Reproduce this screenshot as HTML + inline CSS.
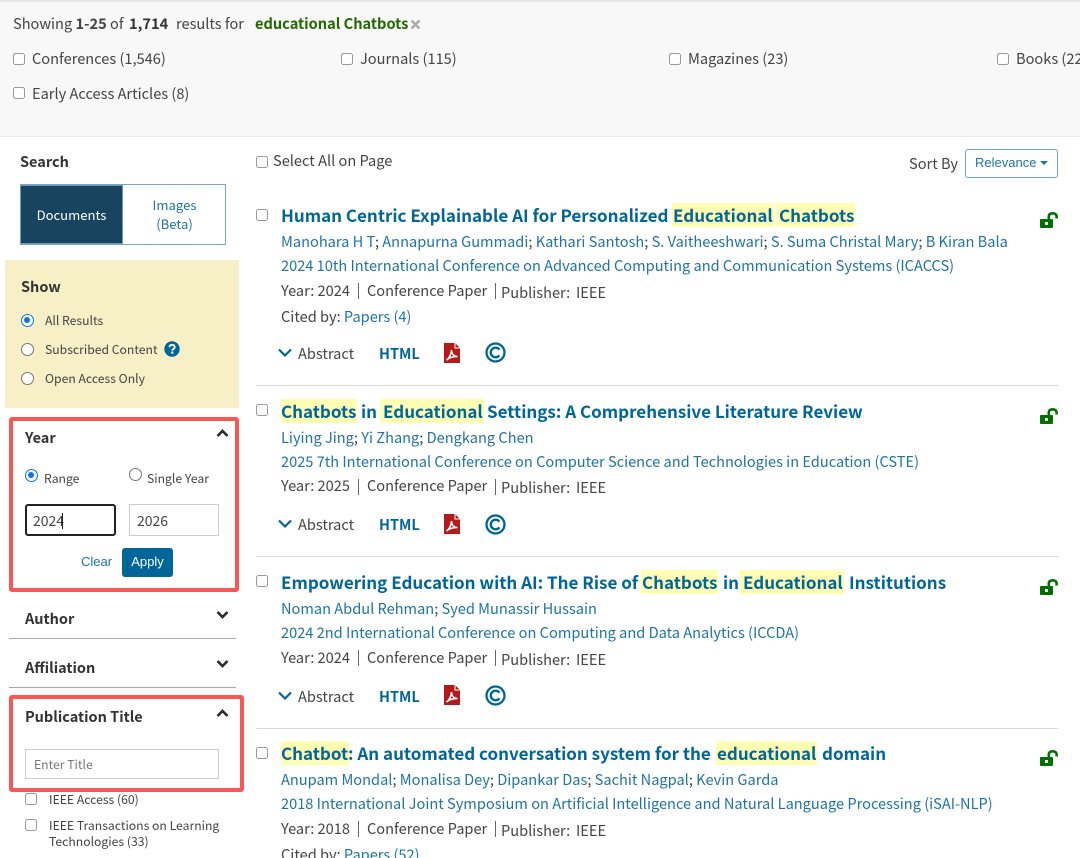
<!DOCTYPE html>
<html lang="en"><head><meta charset="utf-8"><title>Search results</title>
<style>
*{box-sizing:border-box}
html,body{margin:0;padding:0;width:1080px;height:858px;overflow:hidden;background:#fff}
body{position:relative;font-family:"Noto Sans CJK SC","Liberation Sans",sans-serif;color:#444;font-size:14.6px}
.t{position:absolute;white-space:nowrap;line-height:20px;height:20px}
.a{position:absolute}
.l{color:#1f74a6}
.ti{font-size:17px;font-weight:700;color:#006699;line-height:24px;height:24px}
.ti mark{position:absolute;top:0;background:#ffffb3;color:#006699;padding:0 1px}
.ti span{position:absolute;top:0}
.r{font-size:14.6px;color:#444;margin-top:1px}
.c{position:absolute;width:12px;height:12px;border:1px solid #999;border-radius:2.5px;background:#fff}
.s{font-size:12.2px;color:#444}
.h{font-size:14.5px;font-weight:700;color:#333;margin-top:1px}
.red{position:absolute;border:4.5px solid #f95656;border-radius:3px}
.sep{position:absolute;left:256px;width:802px;height:1px;background:#d9d9d9}
.radio{position:absolute;width:13px;height:13px;border-radius:50%;border:1px solid #777;background:#fff}
.radio.on{border:1.5px solid #0b75e0}
.radio.on:after{content:"";position:absolute;left:2px;top:2px;width:6px;height:6px;border-radius:50%;background:#0b75e0}
.ht{font-size:14.5px;font-weight:700;color:#006699;margin-top:1px}
.b{width:1px;height:16px;background:#666}
</style></head><body>

<div class="a" style="left:0;top:0;width:1080px;height:137px;background:#f8f8f8;border-top:2px solid #e6e6e6;border-bottom:1px solid #e9e9e9"></div>
<div class="t" style="left:13px;top:14px">Showing <b style="font-weight:700">1-25</b> of</div>
<div class="t" style="left:129px;top:14px;color:#333"><b>1,714</b></div>
<div class="t" style="left:176px;top:14px">results for</div>
<div class="t" style="left:255px;top:14px;color:#226b00;font-weight:700">educational Chatbots</div>
<svg class="a" style="left:410px;top:19px" width="11" height="11" viewBox="0 0 11 11"><path d="M1.5 1.5L9.5 9.5M9.5 1.5L1.5 9.5" stroke="#aaa" stroke-width="2.4"/></svg>

<div class="c" style="left:13px;top:53px"></div><div class="t" style="left:32px;top:49px">Conferences (1,546)</div>
<div class="c" style="left:341px;top:53px"></div><div class="t" style="left:360px;top:49px">Journals (115)</div>
<div class="c" style="left:669px;top:53px"></div><div class="t" style="left:688px;top:49px">Magazines (23)</div>
<div class="c" style="left:997px;top:53px"></div><div class="t" style="left:1016px;top:49px">Books (22)</div>
<div class="c" style="left:13px;top:87px"></div><div class="t" style="left:32px;top:84px">Early Access Articles (8)</div>

<div class="t h" style="left:20px;top:151px">Search</div>
<div class="a" style="left:20px;top:184px;width:206px;height:61px;border:1px solid #7aa6c2"></div>
<div class="a" style="left:20px;top:185px;width:103px;height:59px;background:#17445e;border:1px solid #6e9ab5"></div>
<div class="t" style="left:20px;top:205px;width:103px;text-align:center;color:#fff;font-size:13.1px">Documents</div>
<div class="t" style="left:123px;top:195px;width:103px;text-align:center;color:#1f74a6;font-size:13.1px">Images</div>
<div class="t" style="left:123px;top:214px;width:103px;text-align:center;color:#1f74a6;font-size:13.1px">(Beta)</div>

<div class="a" style="left:5px;top:260px;width:234px;height:148px;background:#f7efc6"></div>
<div class="t h" style="left:21px;top:276px">Show</div>
<div class="radio on" style="left:21px;top:314px"></div><div class="t s" style="left:45px;top:310px">All Results</div>
<div class="radio" style="left:21px;top:343px"></div><div class="t s" style="left:45px;top:339px">Subscribed Content</div>
<svg class="a" style="left:164px;top:341px" width="16" height="16" viewBox="0 0 16 16"><circle cx="8" cy="8" r="7.7" fill="#006699"/><path d="M5.5 6.2C5.6 4.6 6.7 3.8 8.1 3.8 9.6 3.8 10.7 4.7 10.7 6 10.7 7.8 8.3 7.9 8.3 9.6" fill="none" stroke="#fff" stroke-width="1.9"/><rect x="7.2" y="10.6" width="2.1" height="2" fill="#fff"/></svg>
<div class="radio" style="left:21px;top:372px"></div><div class="t s" style="left:45px;top:368px">Open Access Only</div>

<div class="red" style="left:9px;top:417px;width:230px;height:175px"></div>
<div class="t h" style="left:25px;top:427px">Year</div>
<svg class="a" style="left:216px;top:428px" width="13" height="10" viewBox="0 0 13 10"><path d="M1.5 8L6.5 3 11.5 8" fill="none" stroke="#2b2b2b" stroke-width="2.6"/></svg>
<div class="radio on" style="left:25px;top:469px"></div><div class="t s" style="left:44px;top:468px">Range</div>
<div class="radio" style="left:129px;top:468px"></div><div class="t s" style="left:147px;top:468px">Single Year</div>
<div class="a" style="left:25px;top:504px;width:91px;height:32px;border:2px solid #222;border-radius:3px;background:#fff"></div>
<div class="t" style="left:33px;top:511px;font-size:14px">2024</div>
<div class="a" style="left:62px;top:513px;width:1px;height:16px;background:#222"></div>
<div class="a" style="left:129px;top:504px;width:90px;height:32px;border:1px solid #ccc;background:#fff"></div>
<div class="t" style="left:137px;top:511px;font-size:14px">2026</div>
<div class="t" style="left:81px;top:552px;font-size:13px;color:#1f74a6;font-family:'Liberation Sans',sans-serif">Clear</div>
<div class="a" style="left:122px;top:548px;width:51px;height:29px;background:#006699;border-radius:3px"></div>
<div class="t" style="left:122px;top:552px;width:51px;text-align:center;font-size:13px;color:#fff;font-family:'Liberation Sans',sans-serif">Apply</div>

<div class="t h" style="left:25px;top:608px">Author</div>
<svg class="a" style="left:216px;top:610px" width="13" height="10" viewBox="0 0 13 10"><path d="M1.5 2L6.5 7 11.5 2" fill="none" stroke="#2b2b2b" stroke-width="2.6"/></svg>
<div class="a" style="left:9px;top:638px;width:227px;height:1px;background:#aaa"></div>
<div class="t h" style="left:25px;top:657px">Affiliation</div>
<svg class="a" style="left:216px;top:659px" width="13" height="10" viewBox="0 0 13 10"><path d="M1.5 2L6.5 7 11.5 2" fill="none" stroke="#2b2b2b" stroke-width="2.6"/></svg>
<div class="a" style="left:9px;top:687px;width:227px;height:1px;background:#aaa"></div>

<div class="red" style="left:9px;top:695px;width:235px;height:97px"></div>
<div class="t h" style="left:25px;top:706px">Publication Title</div>
<svg class="a" style="left:216px;top:708px" width="13" height="10" viewBox="0 0 13 10"><path d="M1.5 8L6.5 3 11.5 8" fill="none" stroke="#2b2b2b" stroke-width="2.6"/></svg>
<div class="a" style="left:25px;top:749px;width:194px;height:30px;border:1px solid #ccc;background:#fff"></div>
<div class="t" style="left:34px;top:754px;font-size:12.2px;color:#777">Enter Title</div>

<div class="c" style="left:25px;top:793px"></div><div class="t s" style="left:49px;top:789px">IEEE Access (60)</div>
<div class="c" style="left:25px;top:819px"></div><div class="t s" style="left:49px;top:815px">IEEE Transactions on Learning</div>
<div class="t s" style="left:49px;top:831px">Technologies (33)</div>

<div class="c" style="left:256px;top:156px"></div><div class="t" style="left:273px;top:151px">Select All on Page</div>
<div class="t" style="left:909px;top:154px;color:#444">Sort By</div>
<div class="a" style="left:965px;top:149px;width:93px;height:29px;border:1px solid #6fa3bf;border-radius:3px;background:#fff"></div>
<div class="t" style="left:975px;top:153px;font-size:13px;color:#1f74a6;font-family:'Liberation Sans',sans-serif">Relevance</div>
<div class="a" style="left:1040px;top:161px;width:0;height:0;border-left:4px solid transparent;border-right:4px solid transparent;border-top:4px solid #1f74a6"></div>

<!-- Result 1 -->
<div class="c" style="left:256px;top:209px"></div>
<div class="t ti" style="left:281px;top:203px;width:580px">Human Centric Explainable AI for Personalized<mark style="left:391px">Educational</mark><mark style="left:495px;padding:0 1px 0 3px">Chatbots</mark></div>
<div class="t r" style="left:281px;top:231px"><span class="l">Manohara H T</span>; <span class="l">Annapurna Gummadi</span>; <span class="l">Kathari Santosh</span>; <span class="l">S. Vaitheeshwari</span>; <span class="l">S. Suma Christal Mary</span>; <span class="l">B Kiran Bala</span></div>
<div class="t r" style="left:281px;top:255px;color:#1f74a6">2024 10th International Conference on Advanced Computing and Communication Systems (ICACCS)</div>
<div class="t r" style="left:281px;top:280px">Year: 2024</div><div class="a b" style="left:358px;top:283px"></div>
<div class="t r" style="left:367px;top:280px">Conference Paper</div><div class="a b" style="left:495px;top:283px"></div>
<div class="t r" style="left:501px;top:282px">Publisher:</div><div class="t r" style="left:576px;top:282px">IEEE</div>
<div class="t r" style="left:281px;top:306px">Cited by: <span class="l">Papers (4)</span></div>
<svg class="a" style="left:278px;top:348px" width="14" height="10" viewBox="0 0 14 10"><path d="M1 1.5L7 7.5 13 1.5" fill="none" stroke="#006699" stroke-width="2.2"/></svg>
<div class="t r" style="left:298px;top:343px">Abstract</div>
<div class="t ht" style="left:379px;top:343px">HTML</div>
<svg class="a" style="left:444px;top:343px" width="16" height="20" viewBox="0 0 16 20"><path d="M0 0H10.5V5.5H16V20H0Z" fill="#b31b1b"/><path d="M11.5 0.5L15.5 4.5H11.5Z" fill="#b31b1b"/><path d="M2.5 17C5 15.5 7.5 11 7.5 7 7.5 11 10 13.5 13.5 13.5 10 13.5 5.5 14 2.5 17Z" fill="none" stroke="#fff" stroke-width="1.6"/></svg>
<svg class="a" style="left:485px;top:342px" width="21" height="21" viewBox="0 0 21 21"><circle cx="10.5" cy="10.5" r="9" fill="none" stroke="#006699" stroke-width="2.3"/><path d="M14.4 7.6A4.8 4.8 0 1 0 14.4 13.4" fill="none" stroke="#006699" stroke-width="2.4"/></svg>
<svg class="a" style="left:1040px;top:212px" width="18" height="16" viewBox="0 0 18 16"><rect x="0" y="7" width="13" height="9" rx="1" fill="#007000"/><rect x="5" y="10" width="3" height="3" fill="#fff"/><path d="M8.8 7V4.5C8.8 2.5 10.3 1.3 12.6 1.3 14.9 1.3 16.6 2.5 16.6 4.5V6.5" fill="none" stroke="#007000" stroke-width="2.6"/></svg>
<div class="sep" style="top:385px"></div>

<!-- Result 2 -->
<div class="c" style="left:256px;top:404px"></div>
<div class="t ti" style="left:281px;top:399px;width:590px"><mark style="left:0;padding:0 1px 0 0">Chatbots</mark><span style="left:80px">in</span><mark style="left:99px;padding:0 1px 0 3px">Educational</mark><span style="left:206px">Settings: A Comprehensive Literature Review</span></div>
<div class="t r" style="left:281px;top:427px"><span class="l">Liying Jing</span>; <span class="l">Yi Zhang</span>; <span class="l">Dengkang Chen</span></div>
<div class="t r" style="left:281px;top:451px;color:#1f74a6">2025 7th International Conference on Computer Science and Technologies in Education (CSTE)</div>
<div class="t r" style="left:281px;top:475px">Year: 2025</div><div class="a b" style="left:358px;top:479px"></div>
<div class="t r" style="left:367px;top:475px">Conference Paper</div><div class="a b" style="left:495px;top:479px"></div>
<div class="t r" style="left:501px;top:477px">Publisher:</div><div class="t r" style="left:576px;top:477px">IEEE</div>
<svg class="a" style="left:278px;top:519px" width="14" height="10" viewBox="0 0 14 10"><path d="M1 1.5L7 7.5 13 1.5" fill="none" stroke="#006699" stroke-width="2.2"/></svg>
<div class="t r" style="left:298px;top:514px">Abstract</div>
<div class="t ht" style="left:379px;top:514px">HTML</div>
<svg class="a" style="left:444px;top:514px" width="16" height="20" viewBox="0 0 16 20"><path d="M0 0H10.5V5.5H16V20H0Z" fill="#b31b1b"/><path d="M11.5 0.5L15.5 4.5H11.5Z" fill="#b31b1b"/><path d="M2.5 17C5 15.5 7.5 11 7.5 7 7.5 11 10 13.5 13.5 13.5 10 13.5 5.5 14 2.5 17Z" fill="none" stroke="#fff" stroke-width="1.6"/></svg>
<svg class="a" style="left:485px;top:514px" width="21" height="21" viewBox="0 0 21 21"><circle cx="10.5" cy="10.5" r="9" fill="none" stroke="#006699" stroke-width="2.3"/><path d="M14.4 7.6A4.8 4.8 0 1 0 14.4 13.4" fill="none" stroke="#006699" stroke-width="2.4"/></svg>
<svg class="a" style="left:1040px;top:408px" width="18" height="16" viewBox="0 0 18 16"><rect x="0" y="7" width="13" height="9" rx="1" fill="#007000"/><rect x="5" y="10" width="3" height="3" fill="#fff"/><path d="M8.8 7V4.5C8.8 2.5 10.3 1.3 12.6 1.3 14.9 1.3 16.6 2.5 16.6 4.5V6.5" fill="none" stroke="#007000" stroke-width="2.6"/></svg>
<div class="sep" style="top:556px"></div>

<!-- Result 3 -->
<div class="c" style="left:256px;top:575px"></div>
<div class="t ti" style="left:281px;top:570px;width:670px">Empowering Education with AI: The Rise of<mark style="left:360px">Chatbots</mark><span style="left:442px">in</span><mark style="left:459px;padding:0 1px 0 3px">Educational</mark><span style="left:568px">Institutions</span></div>
<div class="t r" style="left:281px;top:598px"><span class="l">Noman Abdul Rehman</span>; <span class="l">Syed Munassir Hussain</span></div>
<div class="t r" style="left:281px;top:622px;color:#1f74a6">2024 2nd International Conference on Computing and Data Analytics (ICCDA)</div>
<div class="t r" style="left:281px;top:647px">Year: 2024</div><div class="a b" style="left:358px;top:650px"></div>
<div class="t r" style="left:367px;top:647px">Conference Paper</div><div class="a b" style="left:495px;top:650px"></div>
<div class="t r" style="left:501px;top:649px">Publisher:</div><div class="t r" style="left:576px;top:649px">IEEE</div>
<svg class="a" style="left:278px;top:691px" width="14" height="10" viewBox="0 0 14 10"><path d="M1 1.5L7 7.5 13 1.5" fill="none" stroke="#006699" stroke-width="2.2"/></svg>
<div class="t r" style="left:298px;top:686px">Abstract</div>
<div class="t ht" style="left:379px;top:686px">HTML</div>
<svg class="a" style="left:444px;top:685px" width="16" height="20" viewBox="0 0 16 20"><path d="M0 0H10.5V5.5H16V20H0Z" fill="#b31b1b"/><path d="M11.5 0.5L15.5 4.5H11.5Z" fill="#b31b1b"/><path d="M2.5 17C5 15.5 7.5 11 7.5 7 7.5 11 10 13.5 13.5 13.5 10 13.5 5.5 14 2.5 17Z" fill="none" stroke="#fff" stroke-width="1.6"/></svg>
<svg class="a" style="left:485px;top:685px" width="21" height="21" viewBox="0 0 21 21"><circle cx="10.5" cy="10.5" r="9" fill="none" stroke="#006699" stroke-width="2.3"/><path d="M14.4 7.6A4.8 4.8 0 1 0 14.4 13.4" fill="none" stroke="#006699" stroke-width="2.4"/></svg>
<svg class="a" style="left:1040px;top:579px" width="18" height="16" viewBox="0 0 18 16"><rect x="0" y="7" width="13" height="9" rx="1" fill="#007000"/><rect x="5" y="10" width="3" height="3" fill="#fff"/><path d="M8.8 7V4.5C8.8 2.5 10.3 1.3 12.6 1.3 14.9 1.3 16.6 2.5 16.6 4.5V6.5" fill="none" stroke="#007000" stroke-width="2.6"/></svg>
<div class="sep" style="top:728px"></div>

<!-- Result 4 -->
<div class="c" style="left:256px;top:747px"></div>
<div class="t ti" style="left:281px;top:741px;width:610px"><mark style="left:0;padding:0 1px 0 0">Chatbot</mark><span style="left:67px">: An automated conversation system for the</span><mark style="left:435px">educational</mark><span style="left:541px">domain</span></div>
<div class="t r" style="left:281px;top:769px"><span class="l">Anupam Mondal</span>; <span class="l">Monalisa Dey</span>; <span class="l">Dipankar Das</span>; <span class="l">Sachit Nagpal</span>; <span class="l">Kevin Garda</span></div>
<div class="t r" style="left:281px;top:793px;color:#1f74a6">2018 International Joint Symposium on Artificial Intelligence and Natural Language Processing (iSAI-NLP)</div>
<div class="t r" style="left:281px;top:818px">Year: 2018</div><div class="a b" style="left:358px;top:821px"></div>
<div class="t r" style="left:367px;top:818px">Conference Paper</div><div class="a b" style="left:495px;top:821px"></div>
<div class="t r" style="left:501px;top:820px">Publisher:</div><div class="t r" style="left:576px;top:820px">IEEE</div>
<div class="t r" style="left:281px;top:844px">Cited by: <span class="l">Papers (52)</span></div>
<svg class="a" style="left:1040px;top:750px" width="18" height="16" viewBox="0 0 18 16"><rect x="0" y="7" width="13" height="9" rx="1" fill="#007000"/><rect x="5" y="10" width="3" height="3" fill="#fff"/><path d="M8.8 7V4.5C8.8 2.5 10.3 1.3 12.6 1.3 14.9 1.3 16.6 2.5 16.6 4.5V6.5" fill="none" stroke="#007000" stroke-width="2.6"/></svg>

</body></html>
